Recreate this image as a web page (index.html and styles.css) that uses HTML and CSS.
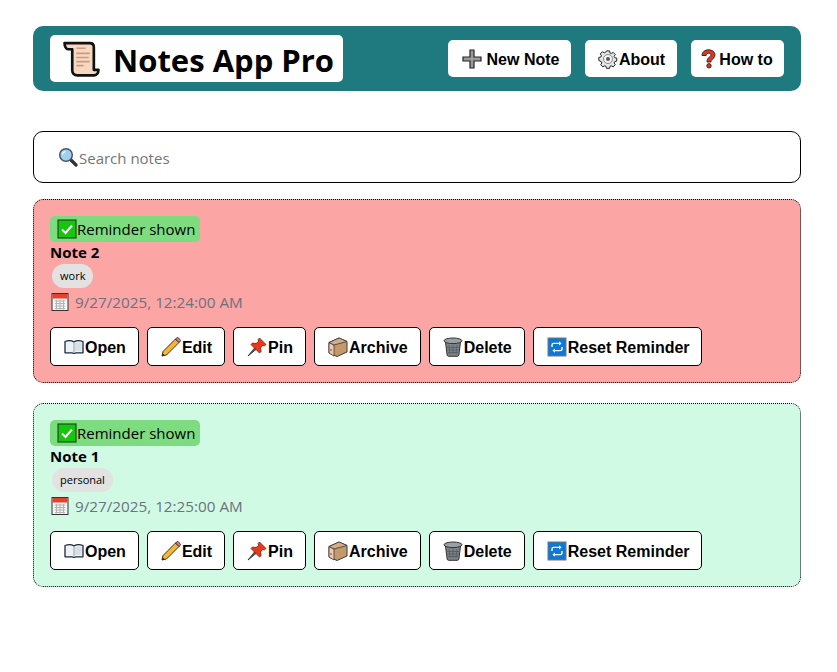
FILE: index.html

```html
<!DOCTYPE html>
<html lang="en">
<head>
    <meta charset="UTF-8">
    <meta name="viewport" content="width=device-width, initial-scale=1.0">
    <title>Notes App Pro</title>
    <link rel="stylesheet" href="styles.css">
</head>
<body>
    <svg class="sprite" xmlns="http://www.w3.org/2000/svg">
        <symbol id="i-scroll" viewBox="0 0 36 36">
            <path d="M1.500 3h24.500c3 0 4 2 4 4v22h4.500c0 3.500-2 5.500-4.500 5.500H14c-3 0-5-2-5-5V9H5C3 9 1.500 6 1.500 3z" fill="#f7d7c0" stroke="#111" stroke-width="2.600" stroke-linejoin="round"/>
            <path d="M13 8h9M13 13h13M13 17h12M13 21h13M13 25h7" stroke="#c99b7d" stroke-width="1.600"/>
        </symbol>
        <symbol id="i-plus" viewBox="0 0 20 20">
            <path d="M8 1h4v7h7v4h-7v7H8v-7H1V8h7z" fill="#9a9a9a" stroke="#222" stroke-width="1.200"/>
        </symbol>
        <symbol id="i-gear" viewBox="0 0 20 20">
            <path d="M8.300 1h3.400l.5 2.300 1.500.6 2-1.300 2.400 2.400-1.300 2 .6 1.500 2.300.5v3.400l-2.300.5-.6 1.500 1.300 2-2.400 2.400-2-1.300-1.500.6-.5 2.300H8.300l-.5-2.300-1.500-.6-2 1.300-2.400-2.400 1.300-2-.6-1.500L-.2 11.700V8.300l2.300-.5.6-1.500-1.300-2 2.400-2.400 2 1.300 1.500-.6z" transform="translate(1 1) scale(.9)" fill="#e6e6e6" stroke="#222" stroke-width="1.100"/>
            <circle cx="10" cy="10" r="4.500" fill="#f4f4f4" stroke="#888" stroke-width="1"/>
            <circle cx="10" cy="10" r="2" fill="#555"/>
        </symbol>
        <symbol id="i-question" viewBox="0 0 20 20">
            <path d="M3 6.500C3 3 6 .8 9.500.8S16 3 16 6c0 2.500-1.800 3.500-3 4.500-.8.700-1 1.300-1 2.500H8c0-2.500.6-3.500 2-4.600 1-.8 2-1.400 2-2.400 0-1-.8-1.800-2.300-1.800S7.200 5 7.200 6.500z" fill="#e3341c" stroke="#222" stroke-width=".9"/>
            <circle cx="10" cy="16.800" r="2.200" fill="#e3341c" stroke="#222" stroke-width=".9"/>
        </symbol>
        <symbol id="i-search" viewBox="0 0 20 20">
            <path d="M12.500 12.500l5.500 5.500" stroke="#333" stroke-width="3.200" stroke-linecap="round"/>
            <circle cx="8" cy="8" r="6.300" fill="#9fd0f2" stroke="#4a5560" stroke-width="1.500"/>
            <path d="M4.500 7.500a3.500 3.500 0 0 1 3-3" stroke="#e4f3fd" stroke-width="1.500" fill="none"/>
        </symbol>
        <symbol id="i-check" viewBox="0 0 20 20">
            <rect x="1" y="1" width="18" height="18" fill="#16c60c" stroke="#1b4d1a" stroke-width="1.200"/>
            <path d="M5 10.500l3.500 3.500 6.500-7.500" fill="none" stroke="#fff" stroke-width="2"/>
        </symbol>
        <symbol id="i-calendar" viewBox="0 0 20 20">
            <rect x="2" y="1.500" width="16" height="17" fill="#f3f3f3" stroke="#333" stroke-width="1"/>
            <rect x="2.500" y="2" width="15" height="4.500" fill="#e8412b"/>
            <path d="M5 9h10M5 11.500h10M5 14h10M5 16.500h10M6.500 8v9.500M10 8v9.500M13.500 8v9.500" stroke="#b4b4b4" stroke-width="1"/>
        </symbol>
        <symbol id="i-book" viewBox="0 0 20 20">
            <path d="M1 4.500c3-1 6.500-1 9 .3 2.500-1.300 6-1.300 9-.3v11.300h-7l-2 .7-2-.7H1z" fill="#eef2f6" stroke="#1c2b3a" stroke-width="1.300" stroke-linejoin="round"/>
            <path d="M10 4.800v11" stroke="#8fa0ae" stroke-width="1"/>
            <path d="M11 6c2-.7 4.500-.7 6.500-.2V14c-2-.4-4.500-.4-6.500.2z" fill="#d8e0e7"/>
        </symbol>
        <symbol id="i-pencil" viewBox="0 0 20 20">
            <path d="M1 19l1-4.500L14.500 2l3.500 3.500L5.500 18z" fill="#f9b62c" stroke="#222" stroke-width=".9" stroke-linejoin="round"/>
            <path d="M14.500 2l1-1c.6-.6 1.300-.6 1.900 0l1.600 1.600c.6.600.6 1.300 0 1.900l-1 1z" fill="#e77b8a" stroke="#222" stroke-width=".9"/>
            <path d="M1 19l.6-2.800 2.200 2.200z" fill="#222"/>
        </symbol>
        <symbol id="i-pin" viewBox="0 0 20 20">
            <path d="M1 19l6.500-8 1.500 1.500z" fill="#666" stroke="#222" stroke-width=".8"/>
            <path d="M12.500 1L19 7.500l-1.500 1.300-2-.3-2 2.500.7 3.500-1.700 1.500L4 7.500 5.500 6l3.500.6 2.500-2-.3-2.200z" fill="#e8391d" stroke="#7a1c0e" stroke-width=".8"/>
        </symbol>
        <symbol id="i-box" viewBox="0 0 20 20">
            <path d="M1 5.500L11 1l8 3.500V15L9 19.500 1 16z" fill="#c49a6c" stroke="#3a3a3a" stroke-width="1"/>
            <path d="M1 5.500l5 2.500v11L1 16z" fill="#e8cdb4" stroke="#3a3a3a" stroke-width=".8"/>
            <path d="M1 5.500L11 1l8 3.500L6 8z" fill="#d3ad85" stroke="#3a3a3a" stroke-width=".8"/>
            <circle cx="3" cy="13" r=".9" fill="#e23b54"/>
        </symbol>
        <symbol id="i-trash" viewBox="0 0 20 20">
            <path d="M2.500 5h15l-1.600 13c-.1.800-.8 1.300-1.500 1.300H5.600c-.7 0-1.400-.5-1.500-1.300z" fill="#7c8387" stroke="#333" stroke-width="1"/>
            <ellipse cx="10" cy="3.800" rx="9" ry="2.800" fill="#9aa0a4" stroke="#333" stroke-width="1"/>
            <path d="M6 8l1 9M10 8v9M14 8l-1 9M4 10.500h12M4.500 13h11M5 15.500h10" stroke="#565c60" stroke-width=".8"/>
        </symbol>
        <symbol id="i-repeat" viewBox="0 0 20 20">
            <rect x="1" y="1" width="18" height="18" fill="#0f78d4" stroke="#777" stroke-width="1"/>
            <path d="M5 10V8c0-1 .6-1.600 1.600-1.600h7M15 10v2c0 1-.6 1.600-1.600 1.600h-7" fill="none" stroke="#fff" stroke-width="1.400"/>
            <path d="M12 4.200l2.600 2.200L12 8.600zM8 11.400l-2.600 2.200L8 15.800z" fill="#fff"/>
        </symbol>
    </svg>

    <header class="topbar">
        <h1 class="brand"><svg class="brand-icon"><use href="#i-scroll"/></svg>Notes App Pro</h1>
        <nav class="topnav">
            <button class="nav-btn nav-new"><svg class="icon"><use href="#i-plus"/></svg>New Note</button>
            <button class="nav-btn nav-about"><svg class="icon"><use href="#i-gear"/></svg>About</button>
            <button class="nav-btn nav-how"><svg class="icon"><use href="#i-question"/></svg>How to</button>
        </nav>
    </header>

    <div class="search">
        <svg class="icon"><use href="#i-search"/></svg>
        <span class="search-text">Search notes</span>
    </div>

    <div class="note note-red">
        <span class="badge"><svg class="icon"><use href="#i-check"/></svg>Reminder shown</span>
        <h3 class="note-title">Note 2</h3>
        <span class="tag">work</span>
        <p class="note-date"><svg class="icon"><use href="#i-calendar"/></svg>9/27/2025, 12:24:00 AM</p>
        <div class="actions">
            <button class="btn"><svg class="icon"><use href="#i-book"/></svg>Open</button>
            <button class="btn"><svg class="icon"><use href="#i-pencil"/></svg>Edit</button>
            <button class="btn"><svg class="icon"><use href="#i-pin"/></svg>Pin</button>
            <button class="btn"><svg class="icon"><use href="#i-box"/></svg>Archive</button>
            <button class="btn"><svg class="icon"><use href="#i-trash"/></svg>Delete</button>
            <button class="btn btn-reset"><svg class="icon"><use href="#i-repeat"/></svg>Reset Reminder</button>
        </div>
    </div>

    <div class="note note-green">
        <span class="badge"><svg class="icon"><use href="#i-check"/></svg>Reminder shown</span>
        <h3 class="note-title">Note 1</h3>
        <span class="tag">personal</span>
        <p class="note-date"><svg class="icon"><use href="#i-calendar"/></svg>9/27/2025, 12:25:00 AM</p>
        <div class="actions">
            <button class="btn"><svg class="icon"><use href="#i-book"/></svg>Open</button>
            <button class="btn"><svg class="icon"><use href="#i-pencil"/></svg>Edit</button>
            <button class="btn"><svg class="icon"><use href="#i-pin"/></svg>Pin</button>
            <button class="btn"><svg class="icon"><use href="#i-box"/></svg>Archive</button>
            <button class="btn"><svg class="icon"><use href="#i-trash"/></svg>Delete</button>
            <button class="btn btn-reset"><svg class="icon"><use href="#i-repeat"/></svg>Reset Reminder</button>
        </div>
    </div>
</body>
</html>
```

FILE: styles.css

```css
body {
    background-color: #fff;
    color: #000;
    font-family: 'Open Sans', 'Noto Sans', sans-serif;
    margin: 0;
    padding: 26px 36px 0 33px;
}

.sprite {
    display: none;
}

.icon {
    width: 20px;
    height: 20px;
    flex: none;
}

.topbar {
    background-color: #1f7a80;
    border-radius: 10px;
    height: 65px;
    box-sizing: border-box;
    padding: 9px 17px;
    display: flex;
    justify-content: space-between;
    align-items: flex-start;
    margin-bottom: 40px;
}

.brand {
    background-color: #fff;
    border-radius: 5px;
    width: 293px;
    height: 47px;
    box-sizing: border-box;
    padding: 3px 0 0 13px;
    margin: 0;
    display: flex;
    align-items: center;
    gap: 13px;
    font-size: 31px;
    font-weight: 700;
    white-space: nowrap;
}

.brand-icon {
    width: 37px;
    height: 37px;
    margin-top: -3px;
    flex: none;
}

.topnav {
    display: flex;
    gap: 14px;
    margin-top: 5px;
}

.nav-btn, .btn {
    font-family: 'Liberation Sans', Arial, sans-serif;
    font-weight: 700;
    font-size: 16px;
    color: #000;
    background-color: #fff;
    display: flex;
    align-items: center;
    justify-content: center;
    cursor: pointer;
}

.nav-btn {
    border: none;
    border-radius: 5px;
    height: 37px;
    padding: 2px 0 0;
    white-space: nowrap;
}

.nav-btn .icon {
    margin-top: -1px;
}

.nav-new { width: 123px; gap: 5px; padding-left: 2px; }
.nav-about { width: 92px; gap: 1px; padding-left: 1px; }
.nav-how { width: 93px; gap: 0; padding-right: 3px; }

.search {
    border: 1px solid #000;
    border-radius: 10px;
    height: 52px;
    box-sizing: border-box;
    padding-left: 24px;
    display: flex;
    align-items: center;
    gap: 1px;
    margin-bottom: 16px;
}

.search-text {
    color: #757575;
    font-size: 15px;
    padding-top: 2px;
}

.note {
    border: 1px dotted #000;
    border-radius: 10px;
    height: 184px;
    box-sizing: border-box;
    padding: 16px;
    margin-bottom: 20px;
}

.note-red { background-color: #fca5a5; }
.note-green { background-color: #d1fae5; }

.badge {
    background-color: #7ddc80;
    border-radius: 5px;
    height: 26px;
    width: 150px;
    box-sizing: border-box;
    padding-left: 7px;
    display: flex;
    align-items: center;
    font-size: 15px;
    white-space: nowrap;
}

.note-title {
    font-size: 15px;
    font-weight: 700;
    line-height: 20px;
    margin: 0;
}

.tag {
    display: inline-block;
    background-color: #e2e2e2;
    border-radius: 12px;
    font-size: 11px;
    line-height: 24px;
    padding: 0 8px;
    margin: 2px 0 0 2px;
    vertical-align: top;
}

.note-date {
    color: #6b7280;
    font-size: 15.25px;
    line-height: 24px;
    margin: 2px 0 0;
    display: flex;
    align-items: center;
    gap: 5px;
}

.actions {
    display: flex;
    gap: 8px;
    margin-top: 13px;
}

.btn {
    border: 1px solid #000;
    border-radius: 5px;
    height: 39px;
    padding: 2px 12px 0 14px;
    white-space: nowrap;
}

.btn .icon {
    margin: -1px 1px 0 -1px;
}

.btn-reset {
    padding-right: 11px;
}
```
